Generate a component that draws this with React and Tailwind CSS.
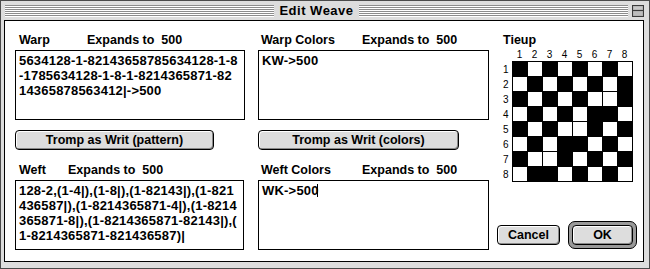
import React from "react";

const tieup = [
  "10101010",
  "01010101",
  "10101001",
  "01010110",
  "10100101",
  "01011010",
  "10010101",
  "01101010",
];

const warpLines = [
  "5634128-1-82143658785634128-1-8",
  "-1785634128-1-8-1-8214365871-82",
  "14365878563412|->500",
];

const weftLines = [
  "128-2,(1-4|),(1-8|),(1-82143|),(1-821",
  "436587|),(1-8214365871-4|),(1-8214",
  "365871-8|),(1-8214365871-82143|),(",
  "1-8214365871-821436587)|",
];

function Stripes() {
  return (
    <div className="flex-1 h-[12px] bg-[repeating-linear-gradient(to_bottom,#8c8c8c_0px,#8c8c8c_1px,#ffffff_1px,#ffffff_2px)]" />
  );
}

function CollapseBox() {
  return (
    <svg width="12" height="12" viewBox="0 0 12 12">
      <rect x="0.5" y="0.5" width="11" height="11" fill="#a8a8a8" stroke="#3a3a3a" />
      <rect x="1.5" y="1.5" width="9" height="3" fill="#c8c8c8" />
      <line x1="1" y1="5.5" x2="11" y2="5.5" stroke="#3a3a3a" />
      <rect x="1.5" y="6.5" width="9" height="4" fill="#bdbdbd" />
    </svg>
  );
}

function TitleBar() {
  return (
    <div className="h-[19px] flex items-center pl-[4px] pr-[5px]">
      <Stripes />
      <div className="px-[5px] text-[13px] leading-[19px] font-bold tracking-[0.5px]">Edit Weave</div>
      <Stripes />
      <div className="ml-[4px] flex">
        <CollapseBox />
      </div>
    </div>
  );
}

function MacButton({ children, className = "" }) {
  return (
    <div
      className={`h-[20px] border border-black rounded-[4px] bg-[#dddddd] shadow-[inset_1px_1px_0_#ffffff,inset_-1px_-1px_0_#8a8a8a] flex items-center justify-center text-[12.5px] font-bold leading-none ${className}`}
    >
      {children}
    </div>
  );
}

function Label({ left, right, offset }) {
  return (
    <div className="h-[15px] flex items-center text-[12.5px] font-bold leading-[15px] whitespace-nowrap">
      <span className="pl-[4px]" style={{ width: offset }}>{left}</span>
      <span>Expands to&nbsp;&nbsp;500</span>
    </div>
  );
}

function TextBox({ lines, cursor }) {
  return (
    <div className="h-[70px] border border-black pt-[2px] pl-[3px] text-[13px] font-bold leading-[15px] tracking-[0.2px] whitespace-nowrap overflow-hidden">
      {lines.map((l, i) => (
        <div key={i} className="flex items-center">
          <span>{l}</span>
          {cursor && i === lines.length - 1 && (
            <span className="inline-block w-[1px] h-[13px] bg-black -ml-[2px]" />
          )}
        </div>
      ))}
    </div>
  );
}

export default function App() {
  return (
    <div className="w-[650px] h-[269px] border border-[#4a4a4a] bg-[#dddddd] flex flex-col font-['Liberation_Sans',Arial,sans-serif] text-black">
      <TitleBar />
      <div className="flex-1 pl-[3px] pr-[5px] pb-[6px] flex">
        <div className="flex-1 border border-black bg-white flex">
          {/* Column 1 */}
          <div className="ml-[10px] w-[230px] flex flex-col pt-[12px]">
            <Label left="Warp" offset="72px" />
            <div className="mt-[2px]">
              <TextBox lines={warpLines} />
            </div>
            <MacButton className="mt-[10px] w-[199px]">Tromp as Writ (pattern)</MacButton>
            <div className="mt-[13px]">
              <Label left="Weft" offset="53px" />
            </div>
            <div className="mt-[2px] w-[229px]">
              <TextBox lines={weftLines} />
            </div>
          </div>
          {/* Column 2 */}
          <div className="ml-[13px] w-[231px] flex flex-col pt-[12px]">
            <div className="h-[15px] flex items-center text-[12.5px] font-bold leading-[15px] whitespace-nowrap">
              <span className="pl-[3px] w-[104px]">Warp Colors</span>
              <span>Expands to&nbsp;&nbsp;500</span>
            </div>
            <div className="mt-[2px]">
              <TextBox lines={["KW->500"]} />
            </div>
            <MacButton className="mt-[10px] w-[201px]">Tromp as Writ (colors)</MacButton>
            <div className="mt-[13px] h-[15px] flex items-center text-[12.5px] font-bold leading-[15px] whitespace-nowrap">
              <span className="pl-[3px] w-[104px]">Weft Colors</span>
              <span>Expands to&nbsp;&nbsp;500</span>
            </div>
            <div className="mt-[2px]">
              <TextBox lines={["WK->500"]} cursor />
            </div>
          </div>
          {/* Right column */}
          <div className="ml-[8px] flex flex-col pt-[12px]">
            <div className="h-[15px] pl-[6px] text-[12.5px] font-bold leading-[15px]">Tieup</div>
            <div className="h-[13px] flex pl-[15px] text-[10px] leading-[13px]">
              {[1, 2, 3, 4, 5, 6, 7, 8].map((n) => (
                <div key={n} className="w-[15px] text-center">{n}</div>
              ))}
            </div>
            <div className="flex pl-[6px]">
              <div className="w-[9px] pt-[1px] flex flex-col text-[10px]">
                {[1, 2, 3, 4, 5, 6, 7, 8].map((n) => (
                  <div key={n} className="h-[15px] leading-[15px] text-left">{n}</div>
                ))}
              </div>
              <div className="border-l border-t border-black flex flex-col">
                {tieup.map((row, r) => (
                  <div key={r} className="flex">
                    {row.split("").map((c, ci) => (
                      <div
                        key={ci}
                        className={`w-[15px] h-[15px] border-r border-b border-black ${c === "1" ? "bg-black" : "bg-white"}`}
                      />
                    ))}
                  </div>
                ))}
              </div>
            </div>
            <div className="mt-[39px] flex items-center">
              <MacButton className="w-[63px]">Cancel</MacButton>
              <div className="ml-[8px] border border-black rounded-[7px] bg-[#9a9a9a] p-[3px]">
                <MacButton className="w-[61px]">OK</MacButton>
              </div>
            </div>
          </div>
        </div>
      </div>
    </div>
  );
}
